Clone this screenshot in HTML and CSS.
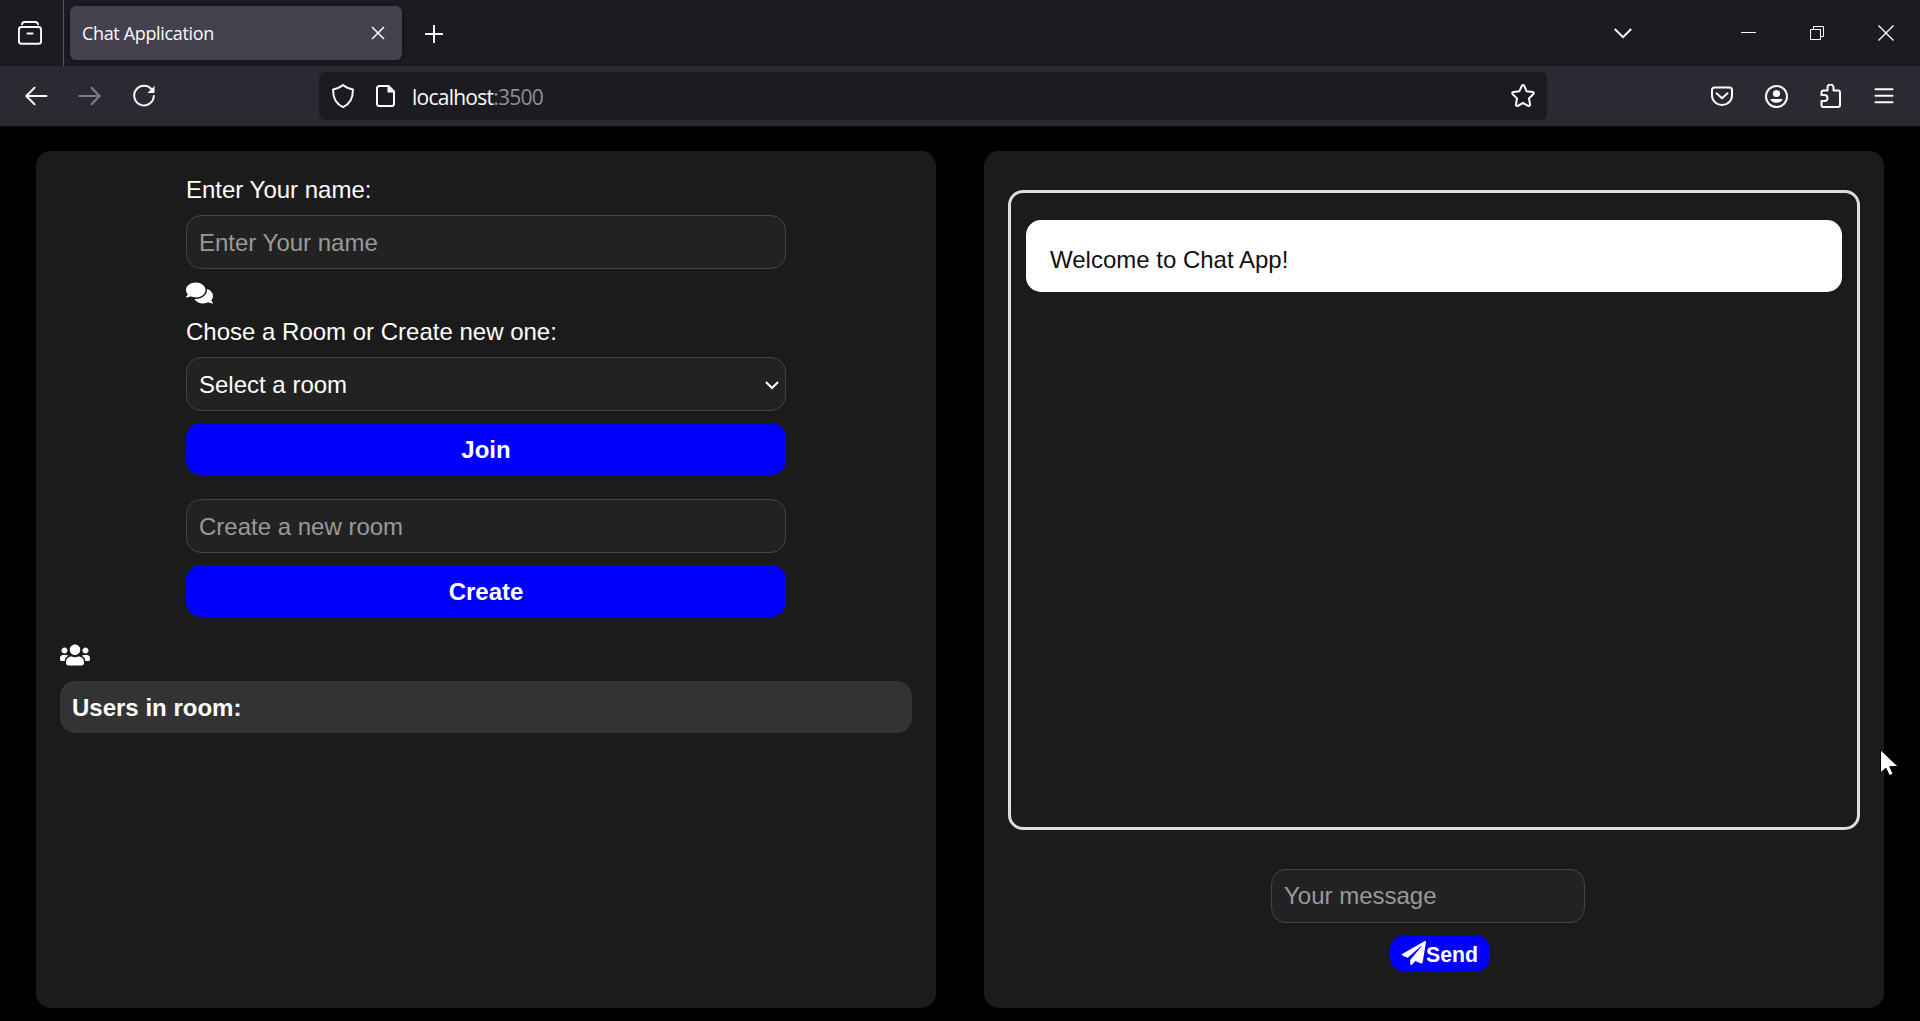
FILE: index.html
```html
<!DOCTYPE html>
<html lang="en">
<head>
<meta charset="utf-8">
<title>Chat Application</title>
<link rel="stylesheet" href="styles.css">
</head>
<body>
<header class="browser">
  <div class="tabstrip">
    <div class="view-button">
      <svg class="icon" viewBox="0 0 24 24"><path d="M4 3.200Q4.300 .9 7 .9h10q2.700 0 3 2.300"/><rect x=".9" y="6" width="22.200" height="16.800" rx="2.500"/><path d="M9.500 12.500h5"/></svg>
    </div>
    <div class="tab">
      <span class="tab-title">Chat Application</span>
      <svg class="tab-close" viewBox="0 0 14 14"><path d="M1 1l12 12M13 1L1 13"/></svg>
    </div>
    <svg class="new-tab" viewBox="0 0 18 18"><path d="M9 0v18M0 9h18"/></svg>
    <div class="window-controls">
      <svg class="tab-list" viewBox="0 0 18 11"><path d="M.8 1l8.200 8.200L17.200 1"/></svg>
      <svg class="minimize" viewBox="0 0 15 15"><path d="M0 6.500h15"/></svg>
      <svg class="restore" viewBox="0 0 14 14"><path d="M.5 3.500h10v10H.5zM3.500 3.500v-3h10v10h-3"/></svg>
      <svg class="close" viewBox="0 0 16 16"><path d="M.5 .5l15 15M15.500 .5l-15 15"/></svg>
    </div>
  </div>
  <div class="toolbar">
    <nav class="nav">
      <svg class="icon" viewBox="0 0 24 24"><path d="M22.500 12H2.500M10.500 3.800L2.300 12l8.200 8.200"/></svg>
      <svg class="icon dim" viewBox="0 0 24 24"><path d="M1.500 12h20M13.500 3.800l8.200 8.200-8.200 8.200"/></svg>
      <svg class="icon" viewBox="0 0 24 24"><path d="M19.700 5.500A9.800 9.800 0 1 0 21.800 12"/><path class="solid" d="M22.500 2v7h-7z"/></svg>
    </nav>
    <div class="urlbar">
      <svg class="icon shield" viewBox="0 0 24 24"><path d="M12 1.100c3 2.500 6.300 3.900 9.900 4.300.2 7.500-2.600 14.500-9.900 17.700C4.700 19.900 1.900 12.900 2.100 5.400 5.700 5 9 3.600 12 1.100z"/></svg>
      <svg class="icon page" viewBox="0 0 24 24"><path d="M6 2h9.500l5.500 5.500V19.500Q21 22 18.500 22h-12Q4 22 4 19.500V4.500Q4 2 6.500 2z"/><path class="solid" d="M14.500 2v6.500H21z"/></svg>
      <span class="url">localhost<span class="port">:3500</span></span>
      <svg class="icon star" viewBox="0 0 24 24"><path d="M10.800 1.900q1.200-1.700 2.400 0l2.500 5.400 5.800.8q2.100.4.800 2.100L18 14.400l1 5.900q.2 2.200-1.800 1.500L12 19l-5.200 2.800q-2 .7-1.800-1.500l1-5.900L1.700 10.200Q.4 8.500 2.500 8.100l5.800-.8z"/></svg>
    </div>
    <div class="tools">
      <svg class="icon" viewBox="0 0 24 24"><path d="M4.500 3.500h15q2.500 0 2.500 2.500v5.500a10 9.500 0 0 1-20 0V6q0-2.500 2.500-2.500z"/><path d="M6.500 9.300l5.500 5 5.500-5"/></svg>
      <svg class="icon" viewBox="0 0 24 24"><circle cx="12.500" cy="12.500" r="10.500"/><circle class="solid" cx="12.500" cy="9.500" r="3.600"/><path class="solid" d="M6.500 15h12c-.5 5-11.500 5-12 0z"/></svg>
      <svg class="icon" viewBox="0 0 24 24"><path d="M3.500 11V8.500Q3.500 6.500 5.500 6.500H9.500V3.500a3 3 0 0 1 6 0v3h4.500q2 0 2 2V21q0 2-2 2h-14.500q-2 0-2-2v-4H6.500a3 3 0 0 0 0-6z"/></svg>
      <svg class="icon" viewBox="0 0 24 24"><path d="M3.500 5.200h17M3.500 11.700h17M3.500 18.200h17"/></svg>
    </div>
  </div>
</header>
<main class="app">
  <section class="panel">
    <form class="form">
      <label class="label" for="name">Enter Your name:</label>
      <input class="field" id="name" type="text" placeholder="Enter Your name">
      <svg class="comments" viewBox="0 0 576 512"><path d="M416 192c0-88.400-93.100-160-208-160S0 103.600 0 192c0 34.300 14.100 65.900 38 92-13.400 30.200-35.500 54.200-35.800 54.500-2.200 2.300-2.800 5.700-1.500 8.700S4.800 352 8 352c36.600 0 66.900-12.300 88.700-25 32.200 15.700 70.300 25 111.300 25 114.900 0 208-71.600 208-160zm122 220c23.900-26 38-57.700 38-92 0-66.900-53.500-124.200-129.300-148.100.9 6.600 1.300 13.300 1.300 20.100 0 105.900-107.700 192-240 192-10.800 0-21.300-.8-31.700-1.900C207.800 439.600 281.800 480 368 480c41 0 79.100-9.200 111.300-25 21.800 12.700 52.100 25 88.700 25 3.200 0 6.100-1.900 7.300-4.800 1.300-2.900.7-6.300-1.500-8.700-.3-.3-22.400-24.200-35.800-54.500z"/></svg>
      <label class="label" for="room">Chose a Room or Create new one:</label>
      <div class="select-wrap">
        <select class="field select" id="room"><option>Select a room</option></select>
        <svg class="select-arrow" viewBox="0 0 14 9"><path d="M1 1l6 6 6-6"/></svg>
      </div>
      <button class="button" type="button">Join</button>
      <input class="field new-room" type="text" placeholder="Create a new room" aria-label="New room">
      <button class="button" type="button">Create</button>
    </form>
    <svg class="users-icon" viewBox="0 0 640 512"><path d="M96 224c35.300 0 64-28.700 64-64s-28.700-64-64-64-64 28.700-64 64 28.700 64 64 64zm448 0c35.300 0 64-28.700 64-64s-28.700-64-64-64-64 28.700-64 64 28.700 64 64 64zm32 32h-64c-17.600 0-33.500 7.100-45.100 18.600 40.300 22.100 68.900 62 75.100 109.400h66c17.700 0 32-14.300 32-32v-32c0-35.300-28.700-64-64-64zm-256 0c61.900 0 112-50.100 112-112S381.900 32 320 32 208 82.100 208 144s50.100 112 112 112zm76.800 32h-8.300c-20.800 10-43.900 16-68.500 16s-47.600-6-68.500-16h-8.300C179.600 288 128 339.600 128 403.200V432c0 26.500 21.500 48 48 48h288c26.500 0 48-21.500 48-48v-28.800c0-63.600-51.600-115.200-115.200-115.200zm-223.700-13.400C161.500 263.100 145.600 256 128 256H64c-35.300 0-64 28.700-64 64v32c0 17.700 14.300 32 32 32h65.900c6.300-47.400 34.900-87.300 75.200-109.400z"/></svg>
    <div class="users">Users in room:</div>
  </section>
  <section class="panel chat">
    <div class="messages">
      <div class="message">Welcome to Chat App!</div>
    </div>
    <form class="composer">
      <input class="field message-field" type="text" placeholder="Your message" aria-label="Message">
      <button class="send" type="button"><svg class="plane" viewBox="0 0 512 512"><path d="M476 3.200L12.500 270.600c-18.100 10.400-15.800 35.600 2.200 43.200L121 358.400l287.300-253.200c5.500-4.900 13.300 2.600 8.600 8.300L176 407v80.500c0 23.600 28.500 32.900 42.500 15.800L282 426l124.600 52.200c14.200 6 30.400-2.900 33-18.200l72-432C515 7.800 493.300-6.800 476 3.200z"/></svg>Send</button>
    </form>
  </section>
</main>
<svg class="pointer" viewBox="0 0 19 28"><path d="M.5 .8v23.200l5.300-4.900 3.500 7.500 3.800-1.700-3.400-7.300h8.500z"/></svg>
</body>
</html>
```
FILE: styles.css
```css
* {
  box-sizing: border-box;
}

body {
  margin: 0;
  height: 1021px;
  overflow: hidden;
  display: flex;
  flex-direction: column;
  background: #000;
  color: #fff;
  font-family: Arial, "Liberation Sans", sans-serif;
  font-size: 24px;
}

svg {
  display: block;
  flex: none;
  fill: none;
  stroke: #fbfbfe;
  stroke-width: 2;
}

.icon {
  width: 24px;
  height: 24px;
  stroke-linecap: round;
  stroke-linejoin: round;
}

.solid {
  fill: #fbfbfe;
  stroke: none;
}

.dim {
  opacity: 0.4;
}

/* Browser window */
.browser {
  flex: none;
  font-family: "Segoe UI", "Open Sans", sans-serif;
  color: #fbfbfe;
}

.tabstrip {
  display: flex;
  align-items: center;
  height: 66px;
  background: #1c1b22;
}

.view-button {
  display: flex;
  align-items: center;
  width: 64px;
  height: 66px;
  padding-left: 18px;
  border-right: 1px solid #55545e;
}

.tab {
  display: flex;
  align-items: center;
  justify-content: space-between;
  width: 332px;
  height: 54px;
  margin-left: 6px;
  padding: 0 17px 0 12px;
  border-radius: 6px;
  background: #42414d;
  box-shadow: 0 0 4px rgba(0, 0, 0, 0.5);
}

.tab-title {
  font-size: 18px;
  line-height: 24px;
  letter-spacing: -0.35px;
}

.tab-close {
  width: 14px;
  height: 14px;
  stroke-width: 1.5;
}

.new-tab {
  width: 18px;
  height: 18px;
  margin: 2px 0 0 23px;
}

.window-controls {
  display: flex;
  align-items: center;
  margin-left: auto;
  padding-right: 26px;
}

.window-controls svg {
  stroke-width: 1;
}

.window-controls .tab-list {
  width: 18px;
  height: 11px;
  margin-right: 109px;
  stroke-width: 2;
}

.minimize {
  width: 15px;
  height: 15px;
  margin-right: 54px;
}

.restore {
  width: 14px;
  height: 14px;
  margin-right: 54px;
}

.close {
  width: 16px;
  height: 16px;
}

.window-controls .close {
  stroke-width: 1.4;
}

.toolbar {
  display: flex;
  align-items: center;
  height: 61px;
  padding-bottom: 1px;
  background: #2b2a33;
  border-bottom: 1px solid #0c0c0d;
}

.nav {
  display: flex;
  gap: 30px;
  width: 319px;
  padding-left: 24px;
}

.urlbar {
  display: flex;
  align-items: center;
  width: 1228px;
  height: 48px;
  padding: 0 12px;
  border-radius: 6px;
  background: #1c1b22;
}

.page {
  margin-left: 18px;
}

.url {
  margin: 3px auto 0 15px;
  font-size: 21px;
  line-height: 28px;
  letter-spacing: -0.75px;
}

.port {
  color: #8f8f98;
}

.tools {
  display: flex;
  gap: 30px;
  margin-left: auto;
  padding-right: 24px;
}

/* Chat application */
.app {
  display: flex;
  gap: 48px;
  padding: 24px 36px 0;
}

.panel {
  width: 900px;
  height: 857px;
  padding: 24px;
  border-radius: 15px;
  background: #1b1b1b;
}

.form {
  display: flex;
  flex-direction: column;
  width: 600px;
  margin: 0 auto;
}

.label {
  height: 28px;
  line-height: 30px;
}

.field {
  width: 100%;
  height: 54px;
  margin: 12px 0 0;
  padding: 2px 12px 0;
  border: 1px solid #444;
  border-radius: 15px;
  outline: none;
  background: #222;
  color: #fff;
  font: inherit;
}

.field::placeholder {
  color: #999;
  opacity: 1;
}

.comments,
.users-icon,
.plane {
  fill: #fff;
  stroke: none;
}

.comments {
  width: 27px;
  height: 24px;
  margin: 12px 0;
}

.select-wrap {
  position: relative;
}

.select {
  display: block;
  padding-top: 0;
  appearance: none;
}

.select-arrow {
  position: absolute;
  right: 7px;
  bottom: 21px;
  width: 14px;
  height: 9px;
  stroke: #fff;
}

.button {
  height: 52px;
  margin: 12px 0 0;
  padding: 2px 0 0;
  border: 0;
  border-radius: 15px;
  background: #00f;
  color: #fff;
  font: bold 24px Arial, "Liberation Sans", sans-serif;
}

.new-room {
  margin-top: 24px;
}

.users-icon {
  width: 30px;
  height: 24px;
  margin: 26px 0 14px;
}

.users {
  height: 52px;
  padding: 0 12px;
  border-radius: 15px;
  background: #333;
  font-weight: bold;
  line-height: 54px;
}

.messages {
  height: 640px;
  margin-top: 15px;
  padding: 27px 15px;
  border: 3px solid #ddd;
  border-radius: 15px;
}

.message {
  height: 72px;
  padding: 0 24px;
  border-radius: 15px;
  background: #fff;
  color: #111;
  line-height: 80px;
}

.composer {
  display: flex;
  flex-direction: column;
  align-items: center;
  padding-top: 27px;
}

.message-field {
  width: 314px;
  margin-right: 12px;
  padding-top: 0;
}

.send {
  display: flex;
  align-items: center;
  justify-content: center;
  width: 100px;
  height: 37px;
  margin: 12px 0 0 12px;
  padding: 3px 0 0;
  border: 0;
  border-radius: 15px;
  background: #00f;
  color: #fff;
  font: bold 21.3px Arial, "Liberation Sans", sans-serif;
}

.plane {
  width: 24px;
  height: 24px;
  margin-top: -4px;
}

.pointer {
  position: absolute;
  left: 1880px;
  top: 749px;
  width: 19px;
  height: 28px;
  fill: #fff;
  stroke: #000;
  stroke-width: 1;
}
```
